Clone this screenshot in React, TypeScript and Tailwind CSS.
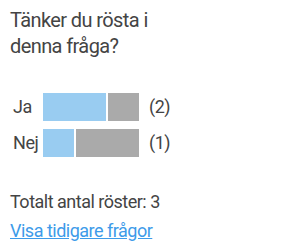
import React from "react";

const rows = [
  { label: "Ja", votes: 2 },
  { label: "Nej", votes: 1 },
];
const total = 3;

export default function App() {
  return (
    <div
      className="w-[305px] h-[248px] bg-white text-[#444444] pl-[10px] pt-[7px]"
      style={{ fontFamily: 'Roboto, "Noto Sans", sans-serif' }}
    >
      <h2 className="text-[20px] leading-[26px] font-normal tracking-[-0.6px]">
        Tänker du rösta i
        <br />
        denna fråga?
      </h2>
      <div className="mt-[34px] flex flex-col gap-[8px]">
        {rows.map((r) => {
          const w = 96;
          const blue = Math.round((r.votes / total) * w);
          return (
            <div key={r.label} className="flex items-center h-[28px]">
              <div className="w-[33px] pl-[3px] text-[18px] leading-[28px] tracking-[-0.4px]">{r.label}</div>
              <div className="flex gap-[2px] w-[96px] h-[28px]">
                <div className="bg-[#99ccf1] h-full" style={{ width: blue - 1 }} />
                <div className="bg-[#aaaaaa] h-full flex-1" />
              </div>
              <div className="ml-[10px] text-[18px] leading-[28px] tracking-[-0.5px]">({r.votes})</div>
            </div>
          );
        })}
      </div>
      <div className="mt-[32px] text-[18px] leading-[26px] tracking-[-0.5px]">
        Totalt antal röster: {total}
      </div>
      <a
        href="#"
        className="block mt-[3px] text-[18px] leading-[26px] text-[#3d9be9] underline w-fit tracking-[-0.5px]"
      >
        Visa tidigare frågor
      </a>
    </div>
  );
}
